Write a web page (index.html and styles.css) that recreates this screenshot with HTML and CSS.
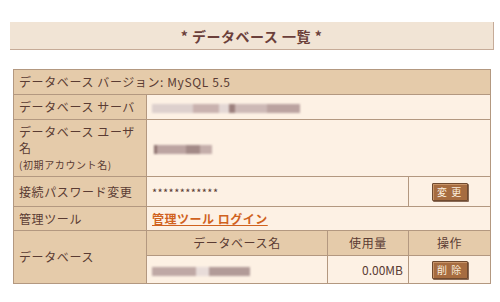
FILE: index.html
```html
<!DOCTYPE html>
<html lang="ja">
<head>
<meta charset="utf-8">
<link rel="stylesheet" href="styles.css">
</head>
<body>
<div class="title-bar">* データベース 一覧 *</div>
<table class="db-table">
  <colgroup>
    <col class="c1"><col class="c2"><col class="c3"><col class="c4">
  </colgroup>
  <tr>
    <th class="label" colspan="4">データベース バージョン: MySQL 5.5</th>
  </tr>
  <tr class="r-server">
    <th class="label">データベース サーバ</th>
    <td class="value" colspan="3"><span class="blur b-server"></span></td>
  </tr>
  <tr class="r-user">
    <th class="label">データベース ユーザ<br>名<br><span class="small">(初期アカウント名)</span></th>
    <td class="value" colspan="3"><span class="blur b-user"></span></td>
  </tr>
  <tr class="r-pass">
    <th class="label">接続パスワード変更</th>
    <td class="value mask" colspan="2">************</td>
    <td class="value center"><button class="btn">変 更</button></td>
  </tr>
  <tr class="r-tool">
    <th class="label">管理ツール</th>
    <td class="value" colspan="3"><a class="link" href="#">管理ツール ログイン</a></td>
  </tr>
  <tr class="r-head">
    <th class="label" rowspan="2">データベース</th>
    <th class="sub">データベース名</th>
    <th class="sub">使用量</th>
    <th class="sub">操作</th>
  </tr>
  <tr class="r-db">
    <td class="value"><span class="blur b-db"></span></td>
    <td class="value right">0.00MB</td>
    <td class="value center"><button class="btn">削 除</button></td>
  </tr>
</table>
</body>
</html>
```
FILE: styles.css
```css
html, body {
  margin: 0;
  padding: 0;
  background: #ffffff;
}
body {
  padding: 22px 5px 0 10px;
  font-family: "Noto Sans CJK JP", "Noto Sans", sans-serif;
  color: #5a3b33;
}
.title-bar {
  width: 484px;
  height: 28px;
  box-sizing: border-box;
  background: #f1e4d5;
  border-right: 1px solid #c6ab98;
  border-bottom: 1px solid #c6ab98;
  text-align: center;
  font-size: 14px;
  font-weight: bold;
  line-height: 28px;
  color: #6b3f3a;
  letter-spacing: 0.5px;
}
.db-table {
  margin: 19px 0 0 3px;
  width: 477px;
  border-collapse: collapse;
  border: 1px solid #b39880;
  font-size: 12px;
  table-layout: fixed;
}
.c1 { width: 133px; }
.c2 { width: 181px; }
.c3 { width: 81px; }
.c4 { width: 82px; }
.db-table th, .db-table td {
  border: 1px solid #b39880;
  padding: 0 5px;
  height: 24px;
  text-align: left;
  font-weight: normal;
  vertical-align: middle;
  line-height: 16px;
}
.label {
  background: #e5cbaa;
  color: #5a3b33;
  letter-spacing: 0.6px;
}
.value {
  background: #fdf1e4;
}
.sub {
  background: #e5cbaa;
  text-align: center !important;
  letter-spacing: 0.6px;
}
.r-user th, .r-user td {
  height: 52px;
  padding-top: 2px;
  padding-bottom: 2px;
}
.r-pass th, .r-pass td { height: 29px; }
.r-tool th, .r-tool td { height: 23px; }
.r-head th { height: 24px; }
.r-db td { height: 27px; }
.small {
  font-size: 10px;
  line-height: 14px;
}
.mask {
  font-size: 11px;
  letter-spacing: 0.4px;
}
.center { text-align: center !important; }
.right { text-align: right !important; }
.link {
  color: #d0621e;
  text-decoration: underline;
  font-weight: bold;
  letter-spacing: 0.5px;
}
.btn {
  font-family: "Noto Sans CJK JP", sans-serif;
  font-size: 10px;
  line-height: 14px;
  width: 36px;
  height: 18px;
  padding: 0;
  color: #fbeede;
  background: #a66c40;
  border: 1px solid #6f4a2f;
  box-shadow: inset 1px 1px 0 #c89468, 1px 1px 0 #8a6a55;
  border-radius: 1px;
  letter-spacing: 1px;
}
.blur {
  display: inline-block;
  height: 9px;
  vertical-align: middle;
  filter: blur(1.2px);
}
.b-server {
  width: 148px;
  background: linear-gradient(90deg, #ddd0cd 0 28%, #c9b2af 28% 45%, #e4d8d5 45% 52%, #9c807d 52% 56%, #cdb9b6 56% 78%, #bba3a0 78% 100%);
}
.b-user {
  width: 58px;
  margin-left: 2px;
  background: linear-gradient(90deg, #8e7370 0 6%, #bca4a1 6% 55%, #a38a87 55% 80%, #c4aeaa 80% 100%);
}
.b-db {
  width: 98px;
  background: linear-gradient(90deg, #bfa8a5 0 45%, #e8dcd9 45% 58%, #b29b98 58% 100%);
}
```
